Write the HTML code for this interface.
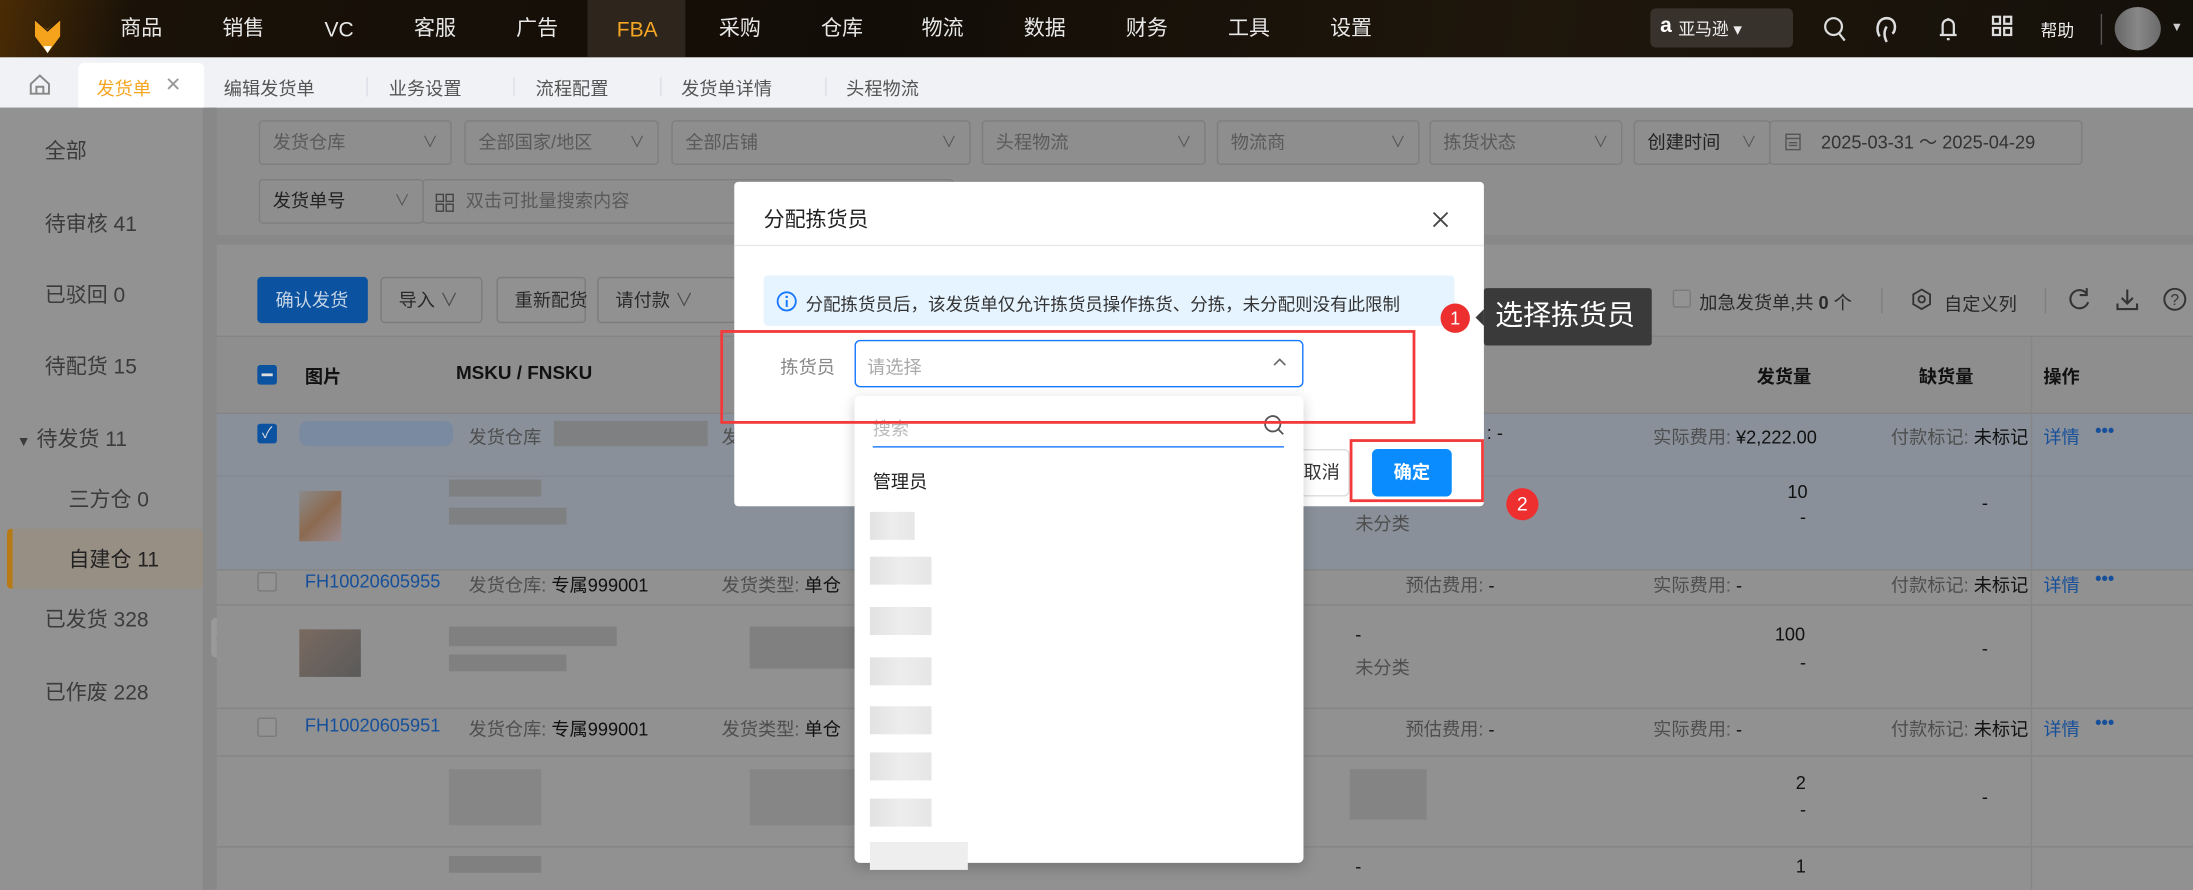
<!DOCTYPE html>
<html><head><meta charset="utf-8"><style>
*{box-sizing:border-box;margin:0;padding:0}
html,body{width:2193px;height:889px;overflow:hidden;background:#8e8e8e}
#s{position:absolute;left:0;top:0;width:1568px;height:636px;transform:scale(1.3986);transform-origin:0 0;font-family:"Liberation Sans","Noto Sans CJK SC",sans-serif;font-size:13px;color:#222;overflow:hidden;background:#8e8e8e}
.a{position:absolute;white-space:nowrap}
.hd{left:0;top:0;width:1568px;height:41px;background:linear-gradient(100deg,#4a2c05 0,#1a1208 6%,#120d07 40%,#1f170c 70%,#14100a 100%)}
.mi{color:#e8e8e8;font-size:15px;top:11px;height:20px;line-height:20px}
.tb{left:0;top:41px;width:1568px;height:36px;background:#f0f2f5}
.tab{top:53px;font-size:13px;color:#555}
.sep{top:55px;width:1px;height:14px;background:#dcdfe6}
.box{height:32px;border:1px solid #7e7e7e;border-radius:3px;background:#8e8e8e;color:#5a5a5a;padding:0 9px;line-height:30px;font-size:13px}
.box i{position:absolute;right:9px;top:0;font-style:normal;color:#555;font-size:11px}
.sb{font-size:15px;color:#3b3b3b}
.btn{height:33px;border:1px solid #7c7c7c;border-radius:3px;line-height:31px;padding:0 12px;color:#2a2a2a;font-size:13px}
.g{color:#4e4e4e}
.blur{background:#7c7c7c;opacity:.8}
.bl{color:#16509a}
.cb{width:14px;height:14px;border:1px solid #7a7a7a;border-radius:2px;background:#939393}
.hl{height:1px;background:#858585;left:155px;width:1413px}
.it{left:622px;width:44px;height:20px;background:linear-gradient(90deg,#e2e2e2,#ededed 50%,#e6e6e6)}
.dots{color:#16509a;font-weight:bold;font-size:13px}
</style></head><body><div id="s">
<div class="a hd"></div>
<svg class="a" style="left:24px;top:12px" width="20" height="34" viewBox="0 0 20 34"><path d="M1 2 L10 9 L19 2 L19 14 L10 26 L1 14Z" fill="#f5a21c"/><path d="M1 2L10 10L19 2" fill="none" stroke="#2a1a05" stroke-width="1"/><path d="M7 27L10 32L13 27Z" fill="#fff" transform="translate(0,-6)"/></svg>
<div class="a" style="left:420px;top:0;width:70px;height:41px;background:#2e261d"></div>
<span class="a mi" style="left:86px">商品</span><span class="a mi" style="left:159px">销售</span><span class="a mi" style="left:232px;top:12px">VC</span><span class="a mi" style="left:296px">客服</span><span class="a mi" style="left:369px">广告</span><span class="a mi" style="left:441px;top:12px;color:#f5a623">FBA</span><span class="a mi" style="left:514px">采购</span><span class="a mi" style="left:587px">仓库</span><span class="a mi" style="left:659px">物流</span><span class="a mi" style="left:732px">数据</span><span class="a mi" style="left:805px">财务</span><span class="a mi" style="left:878px">工具</span><span class="a mi" style="left:951px">设置</span>
<div class="a" style="left:1180px;top:6px;width:102px;height:28px;background:#38322c;border-radius:4px"></div>
<span class="a" style="left:1187px;top:10px;color:#fff;font-weight:bold;font-size:15px">a</span>
<span class="a" style="left:1200px;top:12px;color:#eee;font-size:12px">亚马逊 ▾</span>
<svg class="a" style="left:1303px;top:11px" width="18" height="20"><circle cx="8" cy="8" r="6" fill="none" stroke="#ddd" stroke-width="1.6"/><path d="M12 13l4 5" stroke="#ddd" stroke-width="1.6"/></svg>
<svg class="a" style="left:1340px;top:10px" width="18" height="22"><path d="M4 16 C1 12 2 3 9 3 C16 3 16 12 13 14 M9 9 C7 12 7 16 9 20" fill="none" stroke="#ddd" stroke-width="1.8"/></svg>
<svg class="a" style="left:1384px;top:10px" width="18" height="22"><path d="M3 15h12M5 15V8a4 4 0 0 1 8 0v7M8 18h2M9 3v1" fill="none" stroke="#ddd" stroke-width="1.6"/></svg>
<svg class="a" style="left:1423px;top:10px" width="18" height="20"><rect x="2" y="2" width="5" height="5" fill="none" stroke="#ddd" stroke-width="1.6"/><rect x="10" y="2" width="5" height="5" fill="none" stroke="#ddd" stroke-width="1.6"/><rect x="2" y="10" width="5" height="5" fill="none" stroke="#ddd" stroke-width="1.6"/><rect x="10" y="10" width="5" height="5" fill="none" stroke="#ddd" stroke-width="1.6"/></svg>
<span class="a" style="left:1459px;top:13px;color:#eee;font-size:12px">帮助</span>
<div class="a" style="left:1502px;top:10px;width:1px;height:22px;background:#555"></div>
<div class="a" style="left:1512px;top:5px;width:33px;height:31px;border-radius:50%;background:linear-gradient(90deg,#666,#888,#6a6a6a)"></div>
<span class="a" style="left:1552px;top:14px;color:#ccc;font-size:9px">▼</span>
<div class="a tb"></div>
<svg class="a" style="left:20px;top:52px" width="17" height="17"><path d="M2 8L8.5 2L15 8V15H2Z M6 15V10H11V15" fill="none" stroke="#888" stroke-width="1.4"/></svg>
<div class="a" style="left:56px;top:45px;width:90px;height:32px;background:#fff;border-radius:4px 4px 0 0"></div>
<span class="a tab" style="left:69px;color:#f5a623">发货单</span><span class="a tab" style="left:118px;color:#999;font-size:14px;top:52px">✕</span>
<span class="a tab" style="left:160px">编辑发货单</span><div class="a sep" style="left:262px"></div>
<span class="a tab" style="left:278px">业务设置</span><div class="a sep" style="left:367px"></div>
<span class="a tab" style="left:383px">流程配置</span><div class="a sep" style="left:472px"></div>
<span class="a tab" style="left:487px">发货单详情</span><div class="a sep" style="left:590px"></div>
<span class="a tab" style="left:605px">头程物流</span>
<div class="a" style="left:0;top:77px;width:145px;height:559px;background:#929292"></div>
<div class="a" style="left:145px;top:77px;width:10px;height:559px;background:#888"></div>
<span class="a sb" style="left:32px;top:97px">全部</span>
<span class="a sb" style="left:32px;top:149px">待审核 41</span>
<span class="a sb" style="left:32px;top:200px">已驳回 0</span>
<span class="a sb" style="left:32px;top:251px">待配货 15</span>
<span class="a sb" style="left:12px;top:303px"><span style="font-size:10px">▼</span> 待发货 11</span>
<span class="a sb" style="left:49px;top:346px">三方仓 0</span>
<div class="a" style="left:5px;top:378px;width:140px;height:43px;background:#978f84;border-left:4px solid #b87a12;border-radius:3px"></div>
<span class="a sb" style="left:49px;top:389px;color:#222">自建仓 11</span>
<span class="a sb" style="left:32px;top:432px">已发货 328</span>
<span class="a sb" style="left:32px;top:484px">已作废 228</span>
<div class="a" style="left:151px;top:442px;width:14px;height:28px;background:#9a9a9a;border-radius:3px"></div><span class="a" style="left:154px;top:448px;font-size:10px;color:#333">◀</span>
<div class="a box" style="left:185px;top:86px;width:138px">发货仓库<i>∨</i></div>
<div class="a box" style="left:332px;top:86px;width:139px">全部国家/地区<i>∨</i></div>
<div class="a box" style="left:480px;top:86px;width:214px">全部店铺<i>∨</i></div>
<div class="a box" style="left:702px;top:86px;width:160px">头程物流<i>∨</i></div>
<div class="a box" style="left:870px;top:86px;width:145px">物流商<i>∨</i></div>
<div class="a box" style="left:1022px;top:86px;width:138px">拣货状态<i>∨</i></div>
<div class="a box" style="left:1168px;top:86px;width:98px;color:#222">创建时间<i>∨</i></div>
<div class="a box" style="left:1265px;top:86px;width:224px;color:#333;padding-left:36px">2025-03-31 ～ 2025-04-29</div>
<svg class="a" style="left:1276px;top:94px" width="12" height="14"><rect x="1" y="2" width="10" height="11" fill="none" stroke="#555"/><path d="M1 5h10M3 8h6M3 10h6" stroke="#555"/></svg>
<div class="a box" style="left:185px;top:128px;width:118px;color:#222">发货单号<i>∨</i></div>
<div class="a box" style="left:302px;top:128px;width:380px;padding-left:30px">双击可批量搜索内容</div>
<svg class="a" style="left:311px;top:138px" width="14" height="14"><rect x="1" y="1" width="5" height="5" fill="none" stroke="#444"/><rect x="8" y="1" width="5" height="5" fill="none" stroke="#444"/><rect x="1" y="8" width="5" height="5" fill="none" stroke="#444"/><rect x="8" y="8" width="5" height="5" fill="none" stroke="#444"/></svg>
<div class="a" style="left:155px;top:168px;width:1413px;height:7px;background:#888"></div>
<div class="a" style="left:155px;top:175px;width:1413px;height:461px;background:#919191"></div>
<div class="a btn" style="left:184px;top:198px;width:79px;background:#0b52a0;border-color:#0b52a0;color:#c5d4e5">确认发货</div>
<div class="a btn" style="left:272px;top:198px;width:73px">导入 <span class="g">∨</span></div>
<div class="a btn" style="left:355px;top:198px;width:64px">重新配货</div>
<div class="a btn" style="left:427px;top:198px;width:100px">请付款 <span class="g">∨</span></div>
<div class="a cb" style="left:1196px;top:207px;width:13px;height:13px"></div>
<span class="a" style="left:1215px;top:206px;color:#2a2a2a">加急发货单,共 <b>0</b> 个</span>
<div class="a" style="left:1345px;top:206px;width:1px;height:18px;background:#7e7e7e"></div>
<svg class="a" style="left:1366px;top:206px" width="16" height="16"><path d="M8 1L14 4.5V11.5L8 15L2 11.5V4.5Z" fill="none" stroke="#333" stroke-width="1.3"/><circle cx="8" cy="8" r="2.3" fill="none" stroke="#333" stroke-width="1.3"/></svg>
<span class="a" style="left:1390px;top:207px;color:#2a2a2a">自定义列</span>
<div class="a" style="left:1462px;top:206px;width:1px;height:18px;background:#7e7e7e"></div>
<svg class="a" style="left:1478px;top:205px" width="18" height="18"><path d="M14 5A6.5 6.5 0 1 0 15 11" fill="none" stroke="#333" stroke-width="1.5"/><path d="M14 1v5h-5" fill="none" stroke="#333" stroke-width="1.5"/></svg>
<svg class="a" style="left:1512px;top:205px" width="18" height="18"><path d="M9 2v10M5 8l4 4 4-4M2 12v4h14v-4" fill="none" stroke="#333" stroke-width="1.5"/></svg>
<svg class="a" style="left:1546px;top:205px" width="18" height="18"><circle cx="9" cy="9" r="7.5" fill="none" stroke="#333" stroke-width="1.4"/><text x="9" y="13" font-size="11" text-anchor="middle" fill="#333" font-family="Liberation Sans">?</text></svg>
<div class="a hl" style="top:240px"></div>
<div class="a" style="left:155px;top:241px;width:1413px;height:54px;background:#8e8e8e"></div>
<div class="a" style="left:184px;top:261px;width:14px;height:14px;background:#0b52a0;border-radius:2px"></div><div class="a" style="left:187px;top:267px;width:8px;height:2px;background:#ddd"></div>
<b class="a" style="left:218px;top:259px;color:#111">图片</b>
<b class="a" style="left:326px;top:259px;color:#111;font-size:13.5px">MSKU / FNSKU</b>
<b class="a" style="left:1256px;top:259px;color:#111">发货量</b>
<b class="a" style="left:1372px;top:259px;color:#111">缺货量</b>
<b class="a" style="left:1461px;top:259px;color:#111">操作</b>
<div class="a hl" style="top:295px"></div>
<div class="a" style="left:155px;top:296px;width:1413px;height:111px;background:#899099"></div>
<div class="a" style="left:184px;top:303px;width:14px;height:14px;background:#0b52a0;border-radius:2px;color:#ddd;font-size:11px;line-height:14px;text-align:center">✓</div>
<div class="a" style="left:214px;top:301px;width:110px;height:18px;background:#7a8aa0;border-radius:6px"></div>
<span class="a g" style="left:335px;top:302px">发货仓库</span>
<div class="a blur" style="left:396px;top:301px;width:110px;height:18px"></div>
<span class="a g" style="left:516px;top:302px">发</span>
<span class="a" style="left:1063px;top:302px;color:#111">: -</span>
<span class="a g" style="left:1182px;top:302px">实际费用: <span style="color:#111">¥2,222.00</span></span>
<span class="a g" style="left:1352px;top:302px">付款标记: <span style="color:#111">未标记</span></span>
<span class="a bl" style="left:1461px;top:302px">详情</span><span class="a dots" style="left:1498px;top:300px">•••</span>
<div class="a" style="left:155px;top:340px;width:1413px;height:1px;background:#848a92"></div>
<div class="a" style="left:214px;top:351px;width:30px;height:36px;background:linear-gradient(135deg,#8a8a8a,#8c6a50 50%,#9a8a90)"></div>
<div class="a blur" style="left:321px;top:343px;width:66px;height:12px"></div>
<div class="a blur" style="left:321px;top:363px;width:84px;height:12px"></div>
<span class="a g" style="left:969px;top:364px">未分类</span>
<span class="a" style="left:1278px;top:344px;color:#111">10</span><span class="a" style="left:1287px;top:362px;color:#111">-</span>
<span class="a" style="left:1417px;top:352px;color:#111">-</span>
<div class="a hl" style="top:407px"></div>
<div class="a cb" style="left:184px;top:409px"></div>
<span class="a bl" style="left:218px;top:408px">FH10020605955</span>
<span class="a g" style="left:335px;top:408px">发货仓库: <span style="color:#111">专属999001</span></span>
<span class="a g" style="left:516px;top:408px">发货类型: <span style="color:#111">单仓</span></span>
<span class="a g" style="left:1005px;top:408px">预估费用: <span style="color:#111">-</span></span>
<span class="a g" style="left:1182px;top:408px">实际费用: <span style="color:#111">-</span></span>
<span class="a g" style="left:1352px;top:408px">付款标记: <span style="color:#111">未标记</span></span>
<span class="a bl" style="left:1461px;top:408px">详情</span><span class="a dots" style="left:1498px;top:406px">•••</span>
<div class="a hl" style="top:432px"></div>
<div class="a" style="left:214px;top:450px;width:44px;height:34px;background:linear-gradient(135deg,#7a6a60,#5a5a5a)"></div>
<div class="a blur" style="left:321px;top:448px;width:120px;height:14px"></div>
<div class="a blur" style="left:321px;top:468px;width:84px;height:12px"></div>
<div class="a blur" style="left:536px;top:448px;width:80px;height:30px"></div>
<span class="a" style="left:969px;top:446px;color:#111">-</span><span class="a g" style="left:969px;top:467px">未分类</span>
<span class="a" style="left:1269px;top:446px;color:#111">100</span><span class="a" style="left:1287px;top:466px;color:#111">-</span>
<span class="a" style="left:1417px;top:456px;color:#111">-</span>
<div class="a hl" style="top:506px"></div>
<div class="a cb" style="left:184px;top:513px"></div>
<span class="a bl" style="left:218px;top:511px">FH10020605951</span>
<span class="a g" style="left:335px;top:511px">发货仓库: <span style="color:#111">专属999001</span></span>
<span class="a g" style="left:516px;top:511px">发货类型: <span style="color:#111">单仓</span></span>
<span class="a g" style="left:1005px;top:511px">预估费用: <span style="color:#111">-</span></span>
<span class="a g" style="left:1182px;top:511px">实际费用: <span style="color:#111">-</span></span>
<span class="a g" style="left:1352px;top:511px">付款标记: <span style="color:#111">未标记</span></span>
<span class="a bl" style="left:1461px;top:511px">详情</span><span class="a dots" style="left:1498px;top:509px">•••</span>
<div class="a hl" style="top:540px"></div>
<div class="a blur" style="left:321px;top:550px;width:66px;height:40px;opacity:.5"></div>
<div class="a blur" style="left:536px;top:550px;width:80px;height:40px;opacity:.5"></div>
<div class="a blur" style="left:965px;top:550px;width:55px;height:36px;opacity:.6"></div>
<span class="a" style="left:1284px;top:552px;color:#111">2</span><span class="a" style="left:1287px;top:571px;color:#111">-</span>
<span class="a" style="left:1417px;top:562px;color:#111">-</span>
<div class="a hl" style="top:605px"></div>
<div class="a blur" style="left:321px;top:612px;width:66px;height:12px"></div>
<span class="a" style="left:969px;top:612px;color:#111">-</span>
<span class="a" style="left:1284px;top:612px;color:#111">1</span>
<div class="a" style="left:1452px;top:241px;width:1px;height:395px;background:#868686"></div>
<div class="a" style="left:525px;top:130px;width:536px;height:232px;background:#fff;border-radius:3px"></div>
<span class="a" style="left:546px;top:146px;font-size:15px;color:#222">分配拣货员</span>
<svg class="a" style="left:1024px;top:151px" width="12" height="12"><path d="M1 1L11 11M11 1L1 11" stroke="#444" stroke-width="1.3"/></svg>
<div class="a" style="left:525px;top:175px;width:536px;height:1px;background:#e8e8e8"></div>
<div class="a" style="left:546px;top:197px;width:494px;height:36px;background:#e6f4ff;border-radius:3px"></div>
<svg class="a" style="left:555px;top:208px" width="15" height="15"><circle cx="7.5" cy="7.5" r="6.5" fill="none" stroke="#1677ff" stroke-width="1.3"/><path d="M7.5 6.5v5" stroke="#1677ff" stroke-width="1.4"/><circle cx="7.5" cy="4.3" r=".9" fill="#1677ff"/></svg>
<span class="a" style="left:576px;top:207px;font-size:12.5px;color:#333">分配拣货员后，该发货单仅允许拣货员操作拣货、分拣，未分配则没有此限制</span>
<span class="a" style="left:558px;top:252px;color:#888">拣货员</span>
<div class="a" style="left:611px;top:243px;width:321px;height:34px;border:1px solid #1677ff;border-radius:4px"></div>
<span class="a" style="left:620px;top:252px;color:#aaa">请选择</span>
<svg class="a" style="left:910px;top:255px" width="10" height="8"><path d="M1 6L5 2L9 6" fill="none" stroke="#666" stroke-width="1.2"/></svg>
<div class="a" style="left:895px;top:321px;width:70px;height:34px;border:1px solid #ddd;border-radius:4px;line-height:32px;padding-left:36px;color:#333">取消</div>
<div class="a" style="left:981px;top:321px;width:57px;height:34px;background:#0a8cff;border-radius:4px;line-height:34px;text-align:center;color:#fff;font-weight:bold">确定</div>
<div class="a" style="left:611px;top:283px;width:321px;height:334px;background:#fff;border-radius:4px;box-shadow:0 3px 10px rgba(0,0,0,.2)"></div>
<span class="a" style="left:624px;top:296px;color:#bbb">搜索</span>
<svg class="a" style="left:903px;top:296px" width="16" height="16"><circle cx="7" cy="7" r="5.5" fill="none" stroke="#555" stroke-width="1.3"/><path d="M11 11l3.5 3.5" stroke="#555" stroke-width="1.3"/></svg>
<div class="a" style="left:624px;top:319px;width:294px;height:1px;background:#1677ff"></div>
<span class="a" style="left:624px;top:334px;color:#222">管理员</span>
<div class="a it" style="top:366px;width:32px"></div>
<div class="a it" style="top:398px"></div>
<div class="a it" style="top:434px"></div>
<div class="a it" style="top:470px"></div>
<div class="a it" style="top:505px"></div>
<div class="a it" style="top:538px"></div>
<div class="a it" style="top:571px"></div>
<div class="a it" style="top:602px;width:70px;background:#eee"></div>
<div class="a" style="left:515px;top:236px;width:497px;height:67px;border:2px solid #f23a3a"></div>
<div class="a" style="left:965px;top:314px;width:96px;height:45px;border:2px solid #f23a3a"></div>
<div class="a" style="left:1030px;top:217px;width:21px;height:21px;border-radius:50%;background:#ee2f2f;color:#fff;font-size:13px;line-height:21px;text-align:center">1</div>
<div class="a" style="left:1077px;top:349px;width:23px;height:23px;border-radius:50%;background:#ee2f2f;color:#fff;font-size:14px;line-height:23px;text-align:center">2</div>
<div class="a" style="left:1061px;top:206px;width:120px;height:41px;background:#3a3a3a;border-radius:2px;color:#fff;font-size:20px;line-height:41px;padding-left:8px">选择拣货员</div>
<div class="a" style="left:1055px;top:221px;width:0;height:0;border:6px solid transparent;border-right-color:#3a3a3a;border-left:0"></div>
</div></body></html>
